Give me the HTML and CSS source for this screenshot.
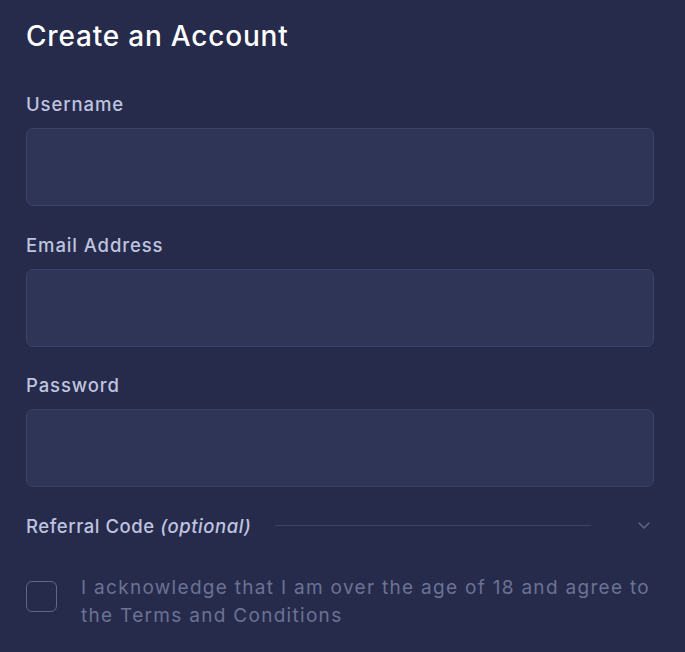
FILE: index.html
```html
<!DOCTYPE html>
<html lang="en">
<head>
<meta charset="utf-8">
<title>Create an Account</title>
<link rel="stylesheet" href="styles.css">
</head>
<body>
<main class="panel">
  <h1 class="title">Create an Account</h1>
  <div class="field">
    <label class="label" for="username">Username</label>
    <input class="input" id="username" type="text">
  </div>
  <div class="field">
    <label class="label" for="email">Email Address</label>
    <input class="input" id="email" type="email">
  </div>
  <div class="field">
    <label class="label" for="password">Password</label>
    <input class="input" id="password" type="password">
  </div>
  <div class="referral">
    <span class="ref-label">Referral Code <em>(optional)</em></span>
    <span class="ref-line"></span>
    <svg class="chevron" width="14" height="9" viewBox="0 0 14 9"><path d="M2 2 L7 7 L12 2" fill="none" stroke="#5b6288" stroke-width="1.6" stroke-linecap="round" stroke-linejoin="round"/></svg>
  </div>
  <div class="agree">
    <span class="checkbox"></span>
    <p class="agree-text">I acknowledge that I am over the age of 18 and agree to the Terms and Conditions</p>
  </div>
</main>
</body>
</html>
```
FILE: styles.css
```css
html, body {
  margin: 0;
  padding: 0;
  background: #262b4c;
}
body {
  font-family: Inter, "Open Sans", "Liberation Sans", sans-serif;
  width: 685px;
  height: 652px;
  overflow: hidden;
}
.panel {
  padding: 18px 31px 0 26px;
  display: flex;
  flex-direction: column;
}
.title {
  margin: 0 0 39px;
  font-size: 28px;
  line-height: 36px;
  font-weight: 500;
  color: #ffffff;
  letter-spacing: 0.8px;
}
.field {
  display: flex;
  flex-direction: column;
  margin-bottom: 27.5px;
}
.field:last-of-type {
  margin-bottom: 27px;
}
.label {
  font-size: 18.5px;
  line-height: 22px;
  font-weight: 500;
  color: #bfc3df;
  margin-bottom: 13px;
  letter-spacing: 0.9px;
}
.input {
  box-sizing: border-box;
  height: 78px;
  width: 100%;
  background: #2e3556;
  border: 1px solid #3b4368;
  border-radius: 7px;
  outline: none;
  margin: 0;
}
.referral {
  display: flex;
  align-items: center;
  height: 22px;
}
.ref-label {
  font-size: 18.5px;
  font-weight: 500;
  color: #bfc3df;
  white-space: nowrap;
  letter-spacing: 0.55px;
}
.ref-label em {
  font-style: italic;
}
.ref-line {
  flex: 1;
  height: 1px;
  background: #3b4266;
  margin: 0 46px 0 24px;
}
.chevron {
  margin-right: 3px;
}
.agree {
  display: flex;
  align-items: flex-start;
  gap: 24px;
  margin-top: 37px;
}
.checkbox {
  box-sizing: border-box;
  width: 31px;
  height: 31px;
  flex: none;
  margin-top: 7px;
  border: 1.5px solid #5f6688;
  border-radius: 6px;
}
.agree-text {
  margin: 0;
  max-width: 575px;
  font-size: 19px;
  line-height: 28px;
  color: #6b7294;
  letter-spacing: 1.3px;
}
```
